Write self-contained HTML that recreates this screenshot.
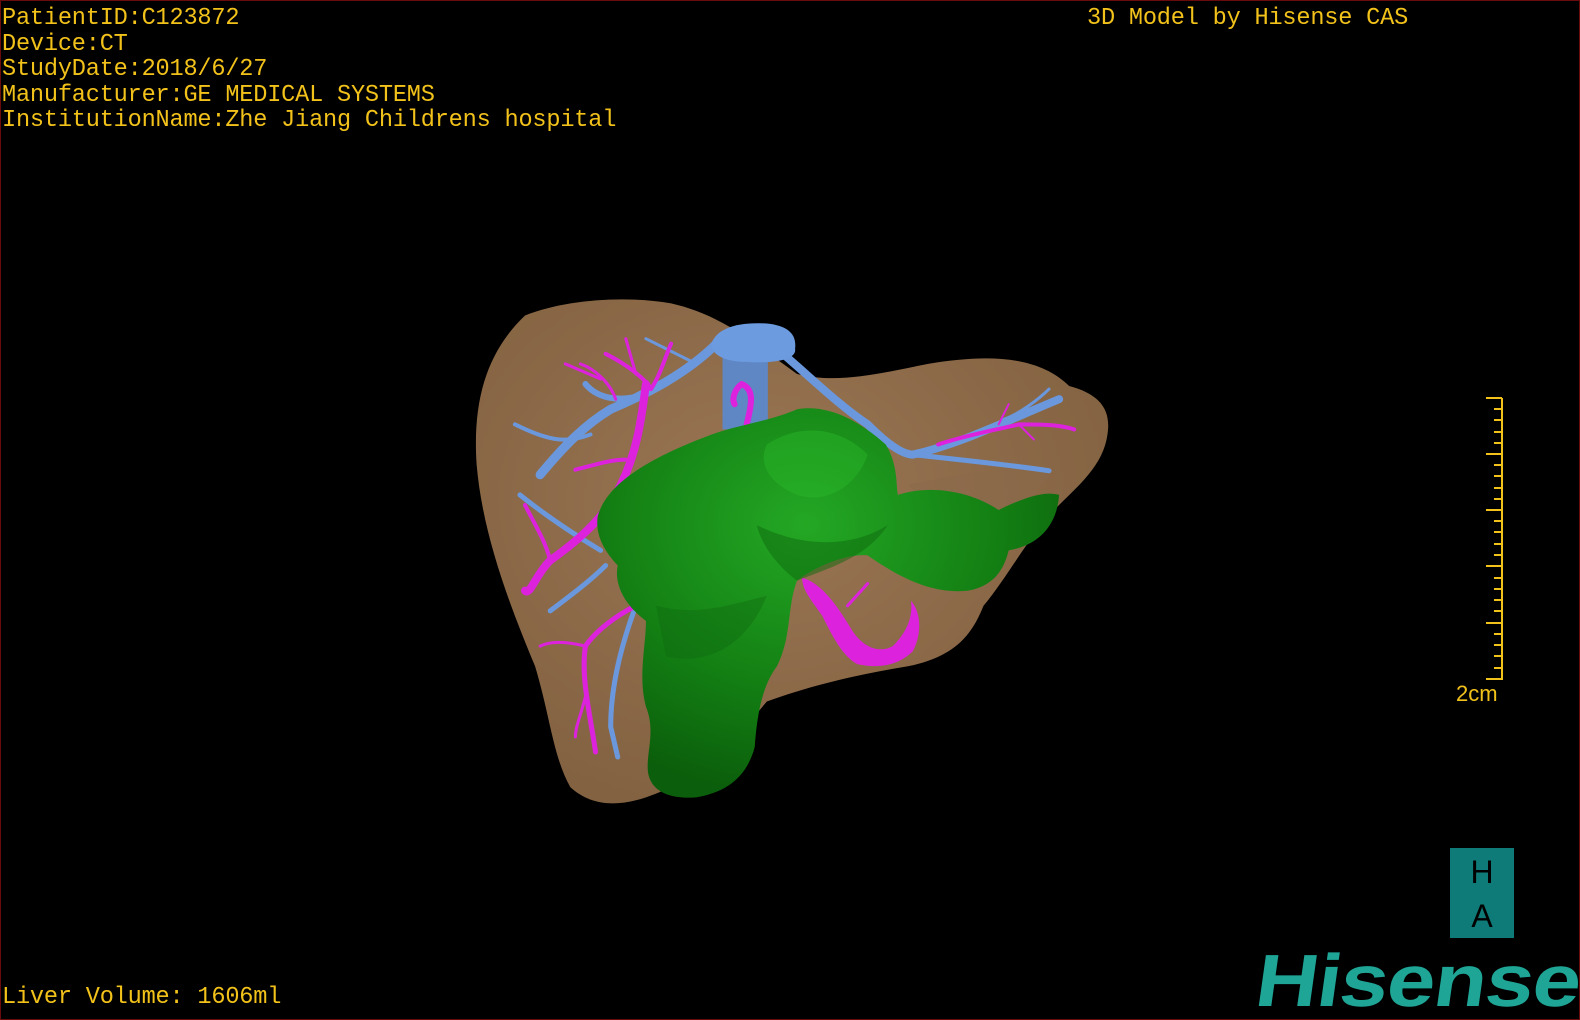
<!DOCTYPE html>
<html><head><meta charset="utf-8"><style>
html,body{margin:0;padding:0;background:#000;}
#f{position:relative;width:1580px;height:1020px;background:#000;overflow:hidden;box-sizing:border-box;border:1px solid #6a0b0b;}
.t{position:absolute;font-family:"Liberation Mono",monospace;font-size:23.6px;color:#f2c21a;white-space:pre;line-height:25.6px;letter-spacing:-0.2px;}
svg{position:absolute;left:0;top:0;}
</style></head><body><div id="f">
<svg width="1580" height="1020" viewBox="0 0 1580 1020">
<defs>
<radialGradient id="lg" cx="0.45" cy="0.4" r="0.7"><stop offset="0" stop-color="#9a7553"/><stop offset="1" stop-color="#80603f"/></radialGradient>
<radialGradient id="gg" cx="0.45" cy="0.3" r="0.7"><stop offset="0" stop-color="#24a824"/><stop offset="0.6" stop-color="#137f13"/><stop offset="1" stop-color="#0b5e0b"/></radialGradient>
</defs>
<g transform="scale(1.0077,1.008)">
<path fill="url(#lg)" d="M520,312 C560,296 620,292 665,300 C700,308 720,322 735,330 L790,370 C830,380 870,370 920,360 C980,350 1030,352 1060,382 C1090,390 1102,405 1098,430 C1094,460 1070,480 1050,500 C1020,530 1000,570 975,600 C965,625 950,650 900,660 C850,668 800,680 760,695 C730,730 700,770 640,790 C610,800 585,798 565,780 C548,750 545,710 530,660 C505,600 478,530 472,460 C468,400 480,350 520,312 Z"/>
<path fill="#8a6a4c" d="M900,480 C950,470 1000,460 1040,470 C1030,490 990,520 960,540 Z" opacity="0.5"/>
<g fill="none" stroke="#6b98dc" stroke-linecap="round" stroke-linejoin="round">
<path d="M710,340 C680,370 640,390 605,405 C580,420 560,440 535,470" stroke-width="9"/>
<path d="M640,390 C610,400 590,392 580,380" stroke-width="6"/>
<path d="M585,430 C560,440 540,435 510,420" stroke-width="4"/>
<path d="M770,345 C800,370 830,400 860,420 C880,440 895,450 905,450 C950,440 990,420 1050,395" stroke-width="8"/>
<path d="M905,450 C950,455 1000,460 1040,466" stroke-width="5"/>
<path d="M995,415 C1010,410 1030,395 1040,385" stroke-width="3"/>
<path d="M640,335 L690,360" stroke-width="3"/>
<path d="M515,490 C540,510 570,530 595,545" stroke-width="5"/>
<path d="M545,605 C565,590 585,575 600,560" stroke-width="5"/>
<path d="M630,600 C615,640 605,680 605,720 L612,750" stroke-width="5"/>
</g>
<rect x="716" y="330" width="45" height="95" fill="#5f87c4"/>
<path fill="#6d9be0" d="M705,340 C710,325 730,318 760,320 C780,322 790,330 788,345 C790,355 770,360 740,358 C720,358 705,352 705,340 Z"/>
<g fill="none" stroke="#dd22dd" stroke-linecap="round" stroke-linejoin="round">
<path d="M640,380 C635,420 630,450 615,480 C600,510 580,530 545,555 C530,570 525,590 520,585" stroke-width="8"/>
<path d="M600,350 C620,360 640,375 645,385 C655,370 660,350 665,340" stroke-width="4"/>
<path d="M575,360 C590,365 605,380 610,395" stroke-width="3"/>
<path d="M620,335 L630,370 M560,360 L595,375" stroke-width="3"/>
<path d="M570,465 C590,460 605,455 620,455" stroke-width="4"/>
<path d="M520,500 C530,520 540,535 545,555" stroke-width="4"/>
<path d="M630,600 C610,610 590,625 580,640 C575,670 585,710 590,745" stroke-width="5"/>
<path d="M580,640 C560,635 545,635 535,640" stroke-width="3"/>
<path d="M580,690 C575,710 570,720 570,730" stroke-width="3"/>
<path d="M740,420 C745,400 748,385 735,380 C728,385 725,395 728,400" stroke-width="6"/>
<path d="M930,440 C960,430 990,425 1010,420 C1030,420 1050,420 1065,425" stroke-width="4"/>
<path d="M990,420 L1000,400 M1010,420 L1025,435" stroke-width="2"/>
<path d="M860,578 L840,600" stroke-width="3"/>
</g>
<path fill="#dd22dd" d="M795,572 C815,578 830,600 845,625 C855,640 870,648 885,640 C900,625 905,610 903,595 C912,605 915,625 905,645 C890,660 870,662 850,658 C835,650 825,630 815,610 C805,595 795,585 795,572 Z"/>
<path fill="url(#gg)" d="M592,512 C600,480 640,455 700,432 C730,420 760,418 790,405 C820,400 850,415 878,440 C890,460 888,478 890,490 C920,480 960,485 990,505 C1010,495 1035,485 1050,490 C1048,520 1030,540 1000,545 C995,565 985,580 960,585 C930,588 900,578 860,550 C840,548 810,560 790,575 C780,600 785,630 770,660 C755,680 750,710 748,740 C740,770 720,785 690,790 C665,792 645,785 642,765 C640,745 650,725 640,700 C632,670 640,640 640,615 C620,600 608,580 612,560 C598,545 590,530 592,512 Z"/>
<path fill="#2bb82b" opacity="0.45" d="M760,440 C790,420 830,420 860,450 C850,480 820,500 790,490 C765,480 750,460 760,440 Z"/>
<path fill="#0e6a0e" opacity="0.5" d="M750,520 C790,540 840,545 880,520 C860,550 830,560 790,575 C770,560 755,540 750,520 Z"/>
<path fill="#0e6a0e" opacity="0.4" d="M650,600 C690,610 720,600 760,590 C740,640 700,660 660,650 Z"/>
</g>
<g stroke="#f2c21a" stroke-width="2">
<line x1="1501" y1="397" x2="1501" y2="679"/>
<line x1="1485" y1="397" x2="1501" y2="397"/>
<line x1="1485" y1="453" x2="1501" y2="453"/>
<line x1="1485" y1="509" x2="1501" y2="509"/>
<line x1="1485" y1="565" x2="1501" y2="565"/>
<line x1="1485" y1="622" x2="1501" y2="622"/>
<line x1="1485" y1="678" x2="1501" y2="678"/>
<path d="M1493,408H1501M1493,419H1501M1493,431H1501M1493,442H1501M1493,464H1501M1493,475H1501M1493,487H1501M1493,498H1501M1493,520H1501M1493,531H1501M1493,543H1501M1493,554H1501M1493,577H1501M1493,588H1501M1493,599H1501M1493,610H1501M1493,633H1501M1493,644H1501M1493,655H1501M1493,667H1501"/>
</g>
<text x="1455" y="700" font-family="Liberation Sans,sans-serif" font-size="22" fill="#f2c21a">2cm</text>
<rect x="1449" y="847" width="64" height="90" fill="#0f7b78"/>
<text x="1481" y="882" text-anchor="middle" font-family="Liberation Sans,sans-serif" font-size="32" fill="#000">H</text>
<text x="1481" y="926" text-anchor="middle" font-family="Liberation Sans,sans-serif" font-size="32" fill="#000">A</text>
<text x="0" y="0" transform="translate(1252,1005) skewX(-8) scale(1.17,1)" font-family="Liberation Sans,sans-serif" font-weight="bold" font-size="74" fill="#1ea596" letter-spacing="-1">Hisense</text>
</svg>
<div class="t" style="left:1px;top:5px">PatientID:C123872
Device:CT
StudyDate:2018/6/27
Manufacturer:GE MEDICAL SYSTEMS
InstitutionName:Zhe Jiang Childrens hospital</div>
<div class="t" style="left:1086px;top:5px">3D Model by Hisense CAS</div>
<div class="t" style="left:1px;top:984px">Liver Volume: 1606ml</div>
</div></body></html>
